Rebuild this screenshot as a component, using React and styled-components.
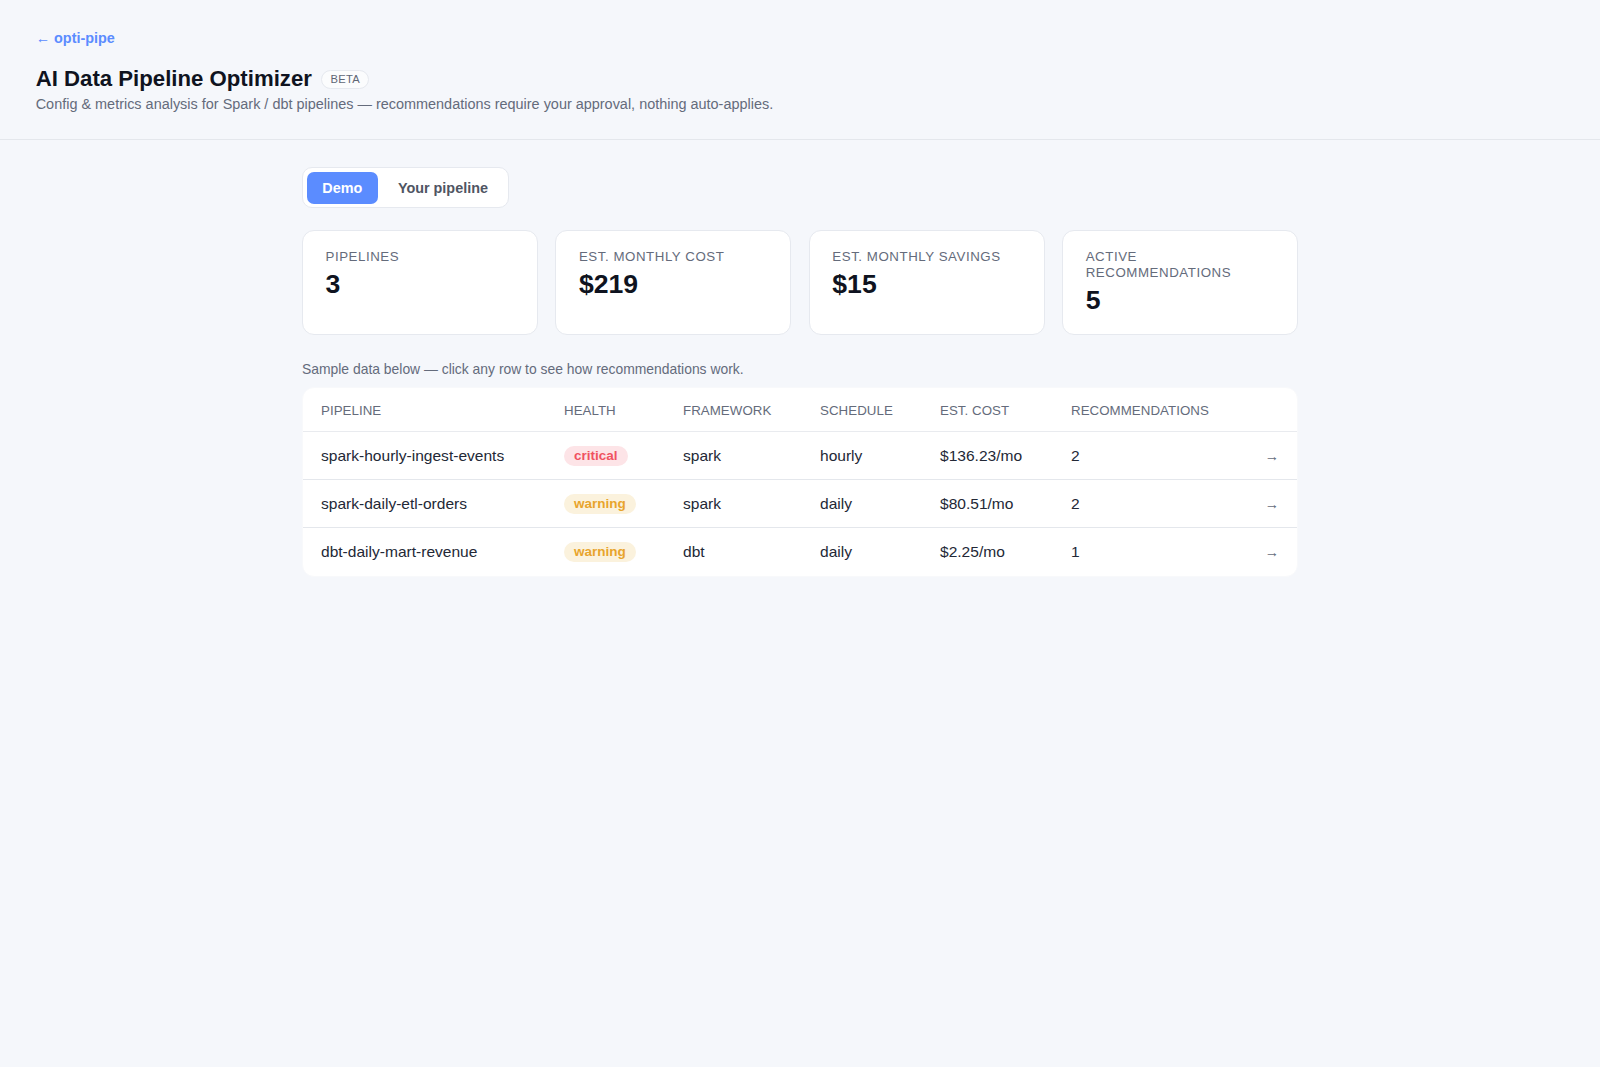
import React from "react";
import styled, { createGlobalStyle } from "styled-components";

const Global = createGlobalStyle`
  html, body { margin: 0; padding: 0; background: #f5f7fb; }
  body { font-family: "Liberation Sans", Arial, sans-serif; color: #1f2430; min-height: 1067px; }
  * { box-sizing: border-box; }
`;

const Header = styled.header`
  height: 140px;
  padding: 29px 36px 0 35.7px;
  border-bottom: 1px solid #e4e7ec;
`;
const BackLink = styled.a`
  display: block;
  height: 18px;
  font-size: 14.4px;
  line-height: 18px;
  font-weight: 700;
  color: #5b8cff;
  text-decoration: none;
`;
const Arrow = styled.span`
  font-weight: 400;
`;
const TitleRow = styled.div`
  display: flex;
  align-items: center;
  gap: 9.5px;
  margin-top: 18px;
  height: 28px;
`;
const Title = styled.h1`
  margin: 0;
  font-size: 22.2px;
  line-height: 28px;
  font-weight: 700;
  color: #0f1320;
`;
const Badge = styled.span`
  height: 19px;
  margin-top: 1px;
  padding: 0 8px;
  border: 1px solid #e6e9ef;
  border-radius: 10px;
  background: #fbfcfd;
  font-size: 11.2px;
  line-height: 17px;
  letter-spacing: 0.3px;
  color: #5f6675;
`;
const Subtitle = styled.p`
  margin: 2px 0 0;
  font-size: 14.44px;
  line-height: 18px;
  color: #646b7b;
`;
const Main = styled.main`
  width: 996px;
  margin: 0 auto;
  padding-top: 27px;
`;
const Tabs = styled.div`
  display: inline-flex;
  gap: 4px;
  padding: 3.5px 4.5px 3.5px 3.5px;
  background: #fff;
  border: 1px solid #e6e9ef;
  border-radius: 10px;
  vertical-align: top;
`;
const Tab = styled.button`
  height: 32px;
  padding: 0 15.8px;
  border: 0;
  border-radius: 7px;
  background: ${p => (p.$active ? "#5b8cff" : "transparent")};
  color: ${p => (p.$active ? "#fff" : "#4f5563")};
  font-family: inherit;
  font-size: 14.4px;
  font-weight: 700;
`;
const Cards = styled.div`
  display: grid;
  grid-template-columns: repeat(4, 1fr);
  gap: 17.6px;
  margin-top: 22px;
`;
const Card = styled.div`
  height: 105px;
  padding: 18px 22.5px;
  background: #fff;
  border: 1px solid #e6e9ef;
  border-radius: 12px;
`;
const CardLabel = styled.div`
  font-size: 13.3px;
  line-height: 16px;
  letter-spacing: 0.55px;
  color: #646b7b;
`;
const CardValue = styled.div`
  margin-top: 2.5px;
  font-size: 26.6px;
  line-height: 32px;
  font-weight: 700;
  color: #0f1320;
`;
const Note = styled.p`
  margin: 25.5px 0 0;
  font-size: 13.9px;
  line-height: 17px;
  color: #646b7b;
`;
const TableCard = styled.div`
  margin-top: 9.5px;
  background: #fff;
  border: 1px solid #f8f9fb;
  border-radius: 12px;
  overflow: hidden;
`;
const Table = styled.table`
  width: 100%;
  border-collapse: collapse;
  table-layout: fixed;
`;
const Th = styled.th`
  height: 43px;
  padding: 2px 18px 0;
  text-align: left;
  font-size: 13.3px;
  font-weight: 400;
  letter-spacing: 0.05px;
  color: #646b7b;
  border-bottom: 1px solid #e9ebef;
`;
const Td = styled.td`
  height: 48px;
  padding: 2px 18px 0;
  font-size: 15.56px;
  color: #232836;
  border-bottom: 1px solid #e4e7ec;
  tr:last-child & { border-bottom: 0; height: 49px; padding-top: 0; }
`;
const ArrowCell = styled(Td)`
  text-align: right;
  font-size: 14.3px;
  color: #646b7b;
`;
const Pill = styled.span`
  display: inline-block;
  padding: 0 10px;
  height: 20px;
  line-height: 20px;
  border-radius: 10px;
  font-size: 13.5px;
  font-weight: 700;
  background: ${p => (p.$level === "critical" ? "#fde4e7" : "#fbf2dd")};
  color: ${p => (p.$level === "critical" ? "#f0525f" : "#e8a42c")};
`;

const cards = [
  ["Pipelines", "3"],
  ["Est. monthly cost", "$219"],
  ["Est. monthly savings", "$15"],
  ["Active recommendations", "5"],
];
const rows = [
  ["spark-hourly-ingest-events", "critical", "spark", "hourly", "$136.23/mo", "2"],
  ["spark-daily-etl-orders", "warning", "spark", "daily", "$80.51/mo", "2"],
  ["dbt-daily-mart-revenue", "warning", "dbt", "daily", "$2.25/mo", "1"],
];
const cols = [243, 119, 137, 120, 131, 190, 54];
const heads = ["Pipeline", "Health", "Framework", "Schedule", "Est. cost", "Recommendations", ""];

export default function App() {
  return (
    <>
      <Global />
      <Header>
        <BackLink href="#"><Arrow>←</Arrow> opti-pipe</BackLink>
        <TitleRow>
          <Title>AI Data Pipeline Optimizer</Title>
          <Badge>BETA</Badge>
        </TitleRow>
        <Subtitle>Config &amp; metrics analysis for Spark / dbt pipelines — recommendations require your approval, nothing auto-applies.</Subtitle>
      </Header>
      <Main>
        <Tabs>
          <Tab $active>Demo</Tab>
          <Tab>Your pipeline</Tab>
        </Tabs>
        <Cards>
          {cards.map(([l, v]) => (
            <Card key={l}>
              <CardLabel>{l.toUpperCase()}</CardLabel>
              <CardValue>{v}</CardValue>
            </Card>
          ))}
        </Cards>
        <Note>Sample data below — click any row to see how recommendations work.</Note>
        <TableCard>
          <Table>
            <colgroup>{cols.map((w, i) => <col key={i} width={w} />)}</colgroup>
            <thead>
              <tr>{heads.map((h, i) => <Th key={i}>{h.toUpperCase()}</Th>)}</tr>
            </thead>
            <tbody>
              {rows.map(r => (
                <tr key={r[0]}>
                  <Td>{r[0]}</Td>
                  <Td><Pill $level={r[1]}>{r[1]}</Pill></Td>
                  <Td>{r[2]}</Td>
                  <Td>{r[3]}</Td>
                  <Td>{r[4]}</Td>
                  <Td>{r[5]}</Td>
                  <ArrowCell>→</ArrowCell>
                </tr>
              ))}
            </tbody>
          </Table>
        </TableCard>
      </Main>
    </>
  );
}
